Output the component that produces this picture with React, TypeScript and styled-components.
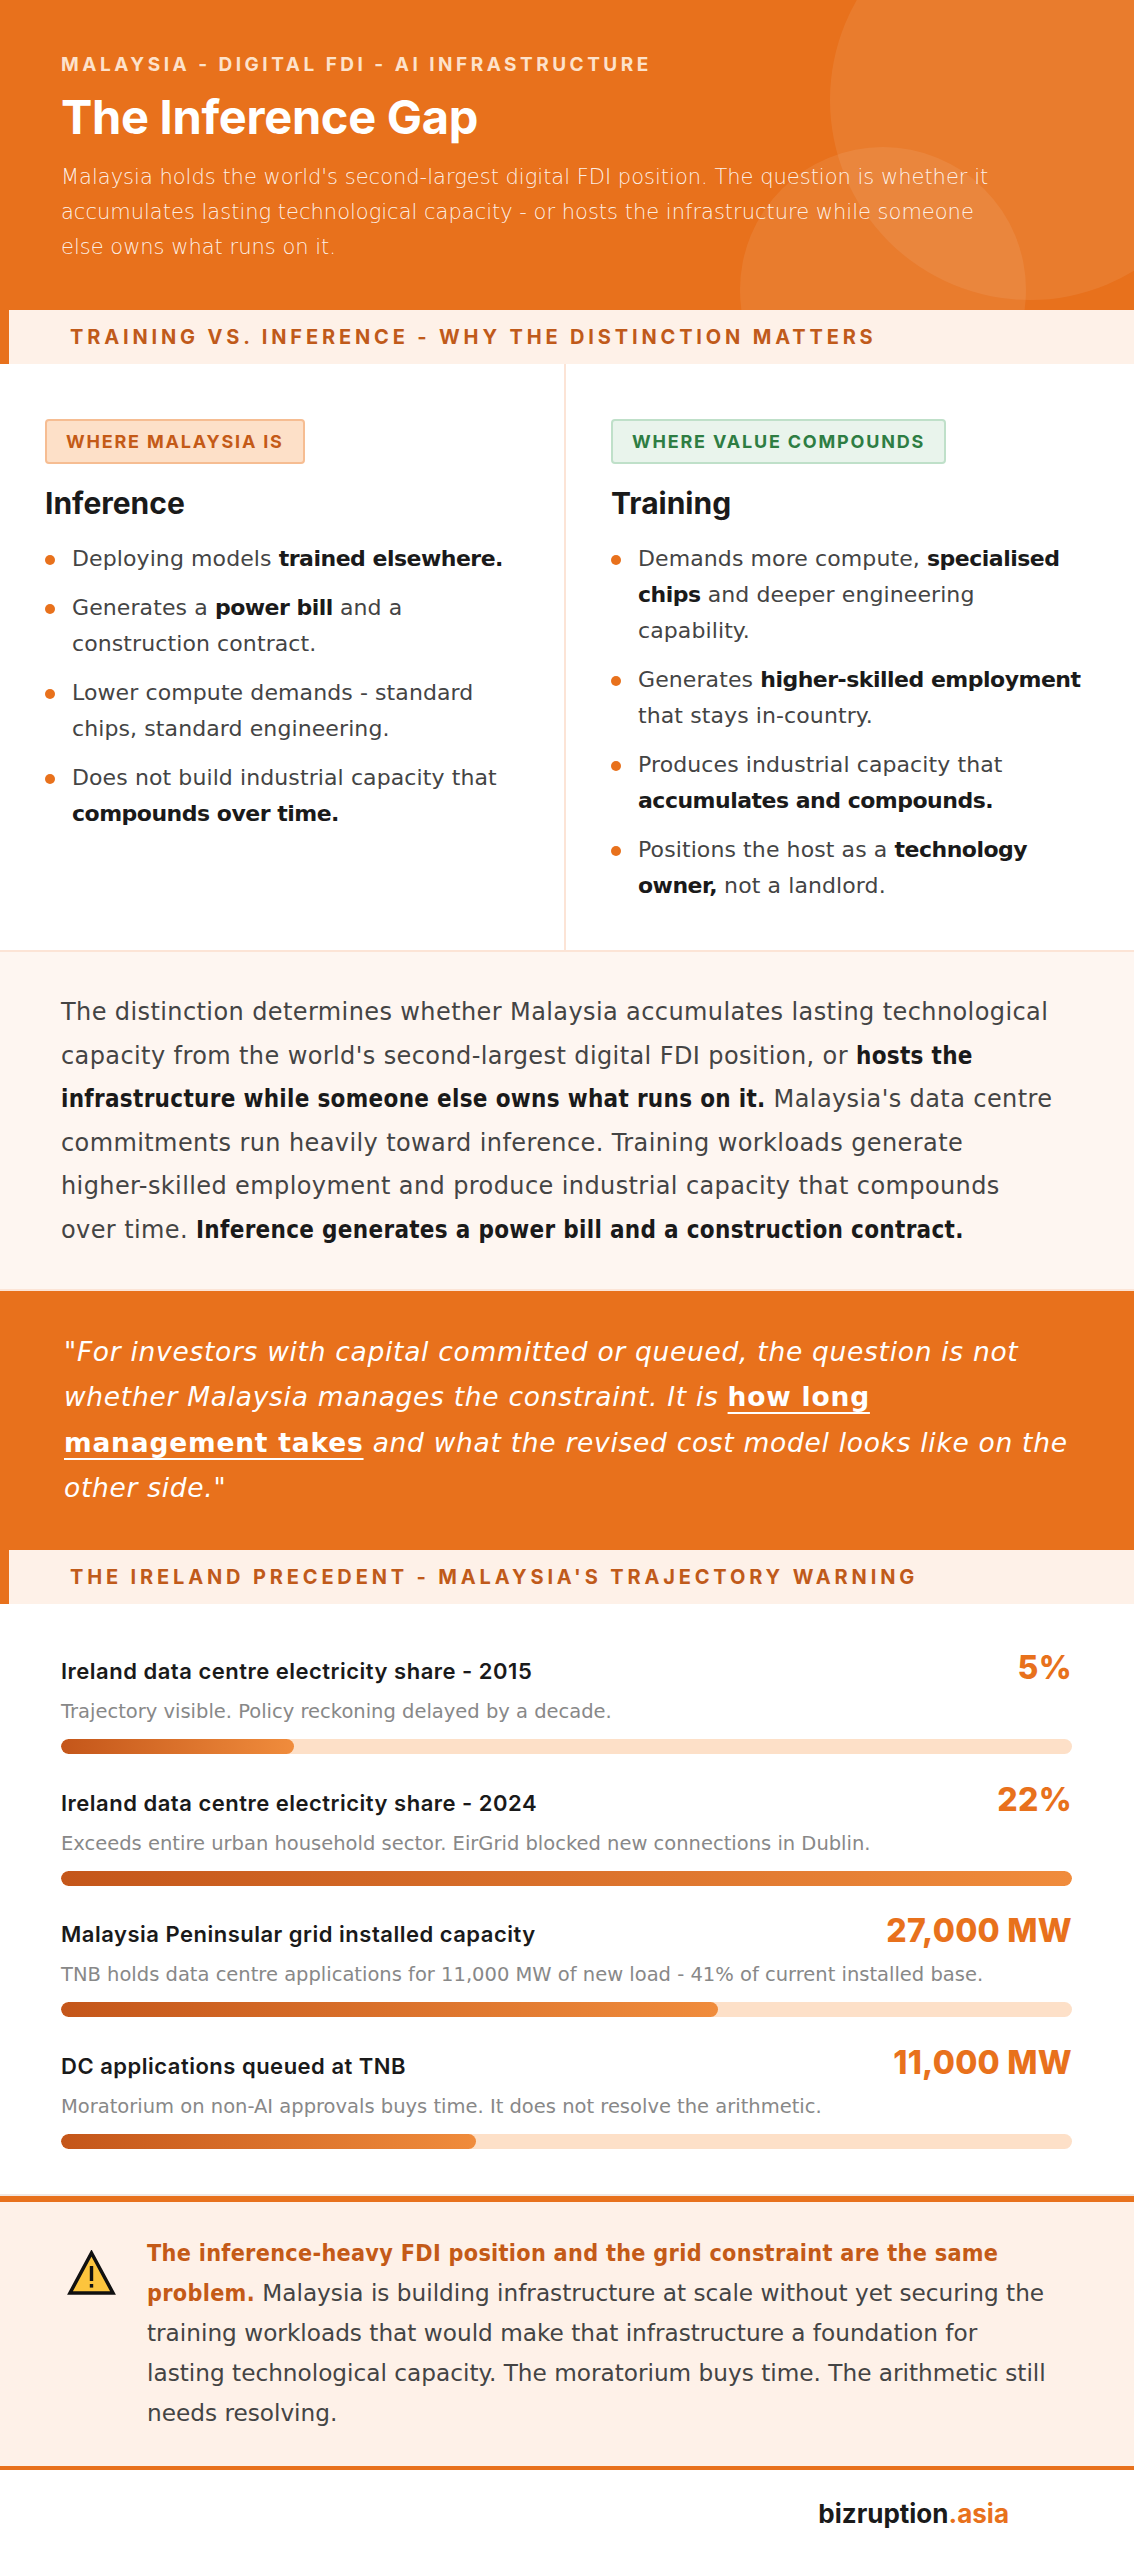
import React from "react";
import styled, { createGlobalStyle } from "styled-components";

const GlobalStyle = createGlobalStyle`
  body {
    margin: 0;
    background: #ffffff;
    font-family: "DejaVu Sans", "Liberation Sans", sans-serif;
    color: #444444;
  }
`;

const head = `Inter, "Open Sans", "Liberation Sans", sans-serif`;
const narrowBold = `"DejaVu Sans Condensed", "DejaVu Sans", sans-serif`;

const Page = styled.div`
  width: 1134px;
  background: #ffffff;
`;

const Header = styled.header`
  position: relative;
  overflow: hidden;
  background: #e8711c;
  padding: 54px 61px 45px;
`;

const Circle = styled.div<{ $size: number; $top: number; $left: number }>`
  position: absolute;
  width: ${(p) => p.$size}px;
  height: ${(p) => p.$size}px;
  top: ${(p) => p.$top}px;
  left: ${(p) => p.$left}px;
  border-radius: 50%;
  background: rgba(255, 255, 255, 0.08);
`;

const HeaderInner = styled.div`
  position: relative;
`;

const Eyebrow = styled.div`
  font-family: ${head};
  font-size: 19px;
  line-height: 22px;
  font-weight: 700;
  letter-spacing: 3.5px;
  color: #fde2cb;
`;

const Title = styled.h1`
  margin: 14px 0 0;
  font-family: ${head};
  font-size: 47px;
  line-height: 54px;
  font-weight: 700;
  color: #ffffff;
  letter-spacing: -0.3px;
`;

const Lede = styled.p`
  margin: 16px 0 0;
  font-size: 21px;
  line-height: 35px;
  font-weight: 300;
  color: rgba(255, 255, 255, 0.9);
`;

const NoWrap = styled.span`
  white-space: nowrap;
`;

const SectionBar = styled.div`
  height: 54px;
  display: flex;
  align-items: center;
  background: #fef1e8;
  border-left: 9px solid #e8711c;
  padding-left: 61px;
  font-family: ${head};
  font-size: 20px;
  font-weight: 700;
  letter-spacing: 3.85px;
  color: #c05a1a;
`;

const Columns = styled.div`
  display: grid;
  grid-template-columns: 566px 1fr;
`;

const Column = styled.div<{ $divider?: boolean }>`
  padding: 55px 45px 46px;
  border-right: ${(p) => (p.$divider ? "2px solid #fce4d6" : "none")};
`;

const Badge = styled.div<{ $tone: "orange" | "green" }>`
  display: inline-flex;
  align-items: center;
  height: 45px;
  box-sizing: border-box;
  padding: 0 19px;
  border-radius: 4px;
  font-family: ${head};
  font-size: 18px;
  font-weight: 700;
  letter-spacing: 1.8px;
  background: ${(p) => (p.$tone === "orange" ? "#fde0c8" : "#e9f4ec")};
  border: 2px solid ${(p) => (p.$tone === "orange" ? "#f6bd92" : "#bfe0c9")};
  color: ${(p) => (p.$tone === "orange" ? "#c45a17" : "#2e7d43")};
`;

const ColTitle = styled.h2`
  margin: 21px 0 0;
  font-family: ${head};
  font-size: 30px;
  line-height: 36px;
  font-weight: 700;
  color: #1a1a1a;
`;

const List = styled.ul`
  list-style: none;
  margin: 20px 0 0;
  padding: 0;
`;

const Item = styled.li`
  display: flex;
  align-items: flex-start;
  font-size: 22px;
  line-height: 36px;
  letter-spacing: 0.1px;
  color: #444444;
  & + & {
    margin-top: 13px;
  }
  b {
    font-weight: 700;
    letter-spacing: -0.5px;
    color: #1a1a1a;
  }
`;

const Dot = styled.span`
  flex: none;
  width: 10px;
  height: 10px;
  border-radius: 50%;
  background: #e8711c;
  margin: 14px 17px 0 0;
`;

const Summary = styled.section`
  background: #fef6f1;
  border-top: 2px solid #fce4d6;
  border-bottom: 2px solid #fce4d6;
  padding: 39px 61px 37px;
  font-size: 24px;
  line-height: 43.5px;
  letter-spacing: 0.4px;
  color: #444444;
  b {
    font-family: ${narrowBold};
    font-stretch: condensed;
    font-weight: 700;
    color: #1a1a1a;
    letter-spacing: 0.3px;
  }
`;

const Quote = styled.blockquote`
  margin: 0;
  background: #e8711c;
  padding: 38px 61px 40px 64px;
  font-size: 26.5px;
  line-height: 45.3px;
  letter-spacing: 0.7px;
  font-style: italic;
  color: #ffffff;
  u {
    font-style: normal;
    font-weight: 700;
    letter-spacing: 0.8px;
    text-decoration-thickness: 2px;
    text-underline-offset: 6px;
  }
`;

const Metrics = styled.section`
  padding: 46px 62px 45px 61px;
  border-bottom: 2px solid #f2e8e2;
`;

const Metric = styled.div`
  & + & {
    margin-top: 27.5px;
  }
`;

const MetricHead = styled.div`
  display: flex;
  justify-content: space-between;
  align-items: baseline;
  height: 36px;
`;

const MetricLabel = styled.div`
  font-family: ${head};
  font-size: 22px;
  font-weight: 600;
  color: #1a1a1a;
  letter-spacing: 0.5px;
`;

const MetricValue = styled.div`
  font-family: ${head};
  font-size: 32px;
  line-height: 36px;
  font-weight: 800;
  color: #e8711c;
  letter-spacing: 0.3px;
`;

const MetricNote = styled.div`
  margin-top: 13px;
  font-size: 19.5px;
  line-height: 26px;
  color: #888888;
`;

const Track = styled.div`
  margin-top: 14px;
  height: 15px;
  border-radius: 8px;
  background: #fde0c8;
  overflow: hidden;
`;

const Fill = styled.div`
  height: 100%;
  border-radius: 8px;
  background: linear-gradient(90deg, #c4561a 0%, #f08c3c 100%);
`;

const Callout = styled.section`
  display: flex;
  align-items: flex-start;
  gap: 31px;
  background: #fef1e8;
  border-top: 6px solid #e8711c;
  border-bottom: 4px solid #e8711c;
  padding: 31px 62px 33px 67px;
`;

const CalloutIcon = styled.svg`
  flex: none;
  width: 49px;
  height: 46px;
  margin-top: 17px;
`;

const CalloutText = styled.p`
  margin: 0;
  font-size: 23.2px;
  line-height: 40px;
  color: #444444;
  b {
    font-family: ${narrowBold};
    font-stretch: condensed;
    font-weight: 700;
    letter-spacing: 0.3px;
    color: #c45a17;
  }
`;

const Footer = styled.footer`
  height: 88px;
  display: flex;
  justify-content: flex-end;
  align-items: center;
  padding-right: 125px;
  font-family: ${head};
  font-size: 26px;
  font-weight: 700;
  color: #1a1a1a;
  span {
    color: #e8711c;
  }
`;

const metrics = [
  {
    label: "Ireland data centre electricity share - 2015",
    value: "5%",
    note: "Trajectory visible. Policy reckoning delayed by a decade.",
    pct: 23,
  },
  {
    label: "Ireland data centre electricity share - 2024",
    value: "22%",
    note: "Exceeds entire urban household sector. EirGrid blocked new connections in Dublin.",
    pct: 100,
  },
  {
    label: "Malaysia Peninsular grid installed capacity",
    value: "27,000 MW",
    note: "TNB holds data centre applications for 11,000 MW of new load - 41% of current installed base.",
    pct: 65,
  },
  {
    label: "DC applications queued at TNB",
    value: "11,000 MW",
    note: "Moratorium on non-AI approvals buys time. It does not resolve the arithmetic.",
    pct: 41,
  },
];

export default function App() {
  return (
    <Page>
      <GlobalStyle />
      <Header>
        <Circle $size={400} $top={-100} $left={830} />
        <Circle $size={286} $top={147} $left={740} />
        <HeaderInner>
          <Eyebrow>MALAYSIA - DIGITAL FDI - AI INFRASTRUCTURE</Eyebrow>
          <Title>The Inference Gap</Title>
          <Lede>
            Malaysia holds the world's second-largest digital FDI position. The question is whether it
            accumulates lasting technological capacity - or hosts the infrastructure while someone{" "}
            <NoWrap>else owns</NoWrap> what runs on it.
          </Lede>
        </HeaderInner>
      </Header>

      <SectionBar>TRAINING VS. INFERENCE - WHY THE DISTINCTION MATTERS</SectionBar>

      <Columns>
        <Column $divider>
          <Badge $tone="orange">WHERE MALAYSIA IS</Badge>
          <ColTitle>Inference</ColTitle>
          <List>
            <Item>
              <Dot />
              <span>
                Deploying models <b>trained elsewhere.</b>
              </span>
            </Item>
            <Item>
              <Dot />
              <span>
                Generates a <b>power bill</b> and a construction contract.
              </span>
            </Item>
            <Item>
              <Dot />
              <span>Lower compute demands - standard chips, standard engineering.</span>
            </Item>
            <Item>
              <Dot />
              <span>
                Does not build industrial capacity that <b>compounds over time.</b>
              </span>
            </Item>
          </List>
        </Column>
        <Column>
          <Badge $tone="green">WHERE VALUE COMPOUNDS</Badge>
          <ColTitle>Training</ColTitle>
          <List>
            <Item>
              <Dot />
              <span>
                Demands more compute, <b>specialised chips</b> and deeper engineering capability.
              </span>
            </Item>
            <Item>
              <Dot />
              <span>
                Generates <b>higher-skilled employment</b> that stays in-country.
              </span>
            </Item>
            <Item>
              <Dot />
              <span>
                Produces industrial capacity that <b>accumulates and compounds.</b>
              </span>
            </Item>
            <Item>
              <Dot />
              <span>
                Positions the host as a <b>technology owner,</b> not a landlord.
              </span>
            </Item>
          </List>
        </Column>
      </Columns>

      <Summary>
        The distinction determines whether Malaysia accumulates lasting technological capacity from
        the world's second-largest digital FDI position, or{" "}
        <b>hosts the infrastructure while someone else owns what runs on it.</b> Malaysia's data
        centre commitments run heavily toward inference. Training workloads generate{" "}
        <NoWrap>higher-skilled</NoWrap> employment and produce industrial capacity that compounds{" "}
        <NoWrap>over time.</NoWrap> <b>Inference generates a power bill and a construction contract.</b>
      </Summary>

      <Quote>
        "For investors with capital committed or queued, the question is not whether Malaysia manages
        the constraint. It is <u>how long management takes</u> and what the revised cost model looks
        like on the other side."
      </Quote>

      <SectionBar>THE IRELAND PRECEDENT - MALAYSIA'S TRAJECTORY WARNING</SectionBar>

      <Metrics>
        {metrics.map((m) => (
          <Metric key={m.label}>
            <MetricHead>
              <MetricLabel>{m.label}</MetricLabel>
              <MetricValue>{m.value}</MetricValue>
            </MetricHead>
            <MetricNote>{m.note}</MetricNote>
            <Track>
              <Fill style={{ width: `${m.pct}%` }} />
            </Track>
          </Metric>
        ))}
      </Metrics>

      <Callout>
        <CalloutIcon viewBox="0 0 49 46">
          <path
            d="M24.5 3 L46 43 L3 43 Z"
            fill="#fcc43d"
            stroke="#111111"
            strokeWidth="3.5"
            strokeLinejoin="miter"
          />
          <rect x="22.8" y="16" width="3.4" height="15" fill="#111111" />
          <rect x="22.8" y="34" width="3.4" height="3.6" fill="#111111" />
        </CalloutIcon>
        <CalloutText>
          <b>The inference-heavy FDI position and the grid constraint are the same problem.</b>{" "}
          Malaysia is building infrastructure at scale without yet securing the training workloads
          that would make that infrastructure a foundation for{" "}
          <NoWrap>lasting technological</NoWrap> capacity. The moratorium buys time. The arithmetic
          still needs resolving.
        </CalloutText>
      </Callout>

      <Footer>
        bizruption<span>.asia</span>
      </Footer>
    </Page>
  );
}
